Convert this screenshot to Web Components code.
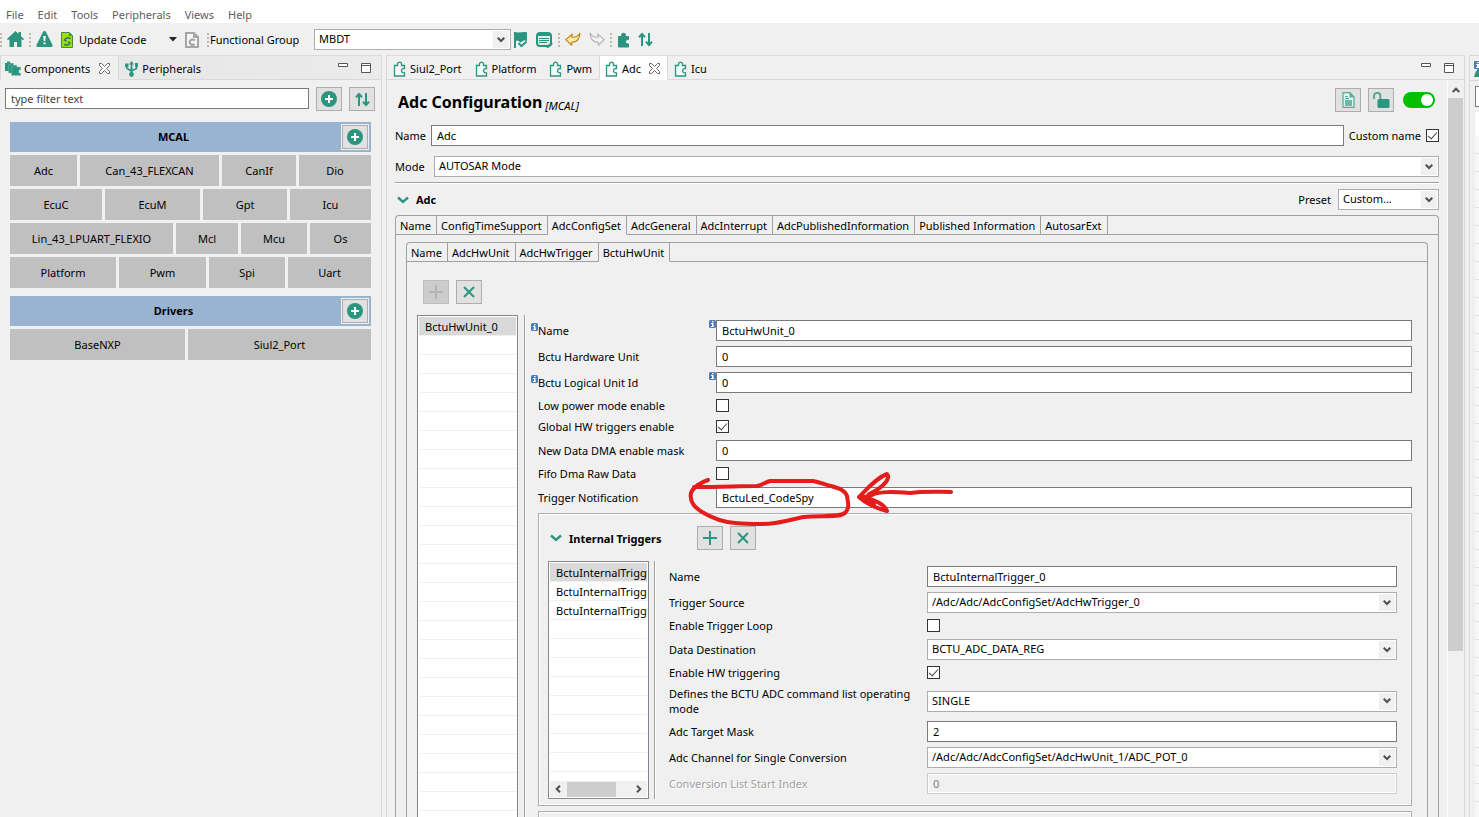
<!DOCTYPE html>
<html lang="en">
<head>
<meta charset="utf-8">
<title>Peripheral configuration</title>
<style>
html,body{margin:0;height:100%;overflow:hidden;background:#f0f0f0}
body{font:11px/15px "Noto Sans","Open Sans",sans-serif;color:#000}
</style>
</head>
<body>
<config-app></config-app>
<script>
const BASE = `*{box-sizing:border-box}
button,input,select{font:inherit;color:inherit;margin:0;border-radius:0;outline:none}
button{background:none;border:0;padding:0}
svg{display:block;flex:none}`;

const G = '#2b957f';
const PUZZLE = 'M1.5 4.500h3V3.200a2 2 0 1 1 4 0v1.300h3v3h-.8a2.200 2.200 0 1 0 0 4.400h.8v3.100h-10z';
const ICONS = {
  home: [17,17,`<path fill="${G}" d="M8.500 0 0 8l1 1.300 1.500-1.200V16H7v-5h3v5h4.500V8.100L16 9.300 17 8l-3-2.800V1h-2.500v2z"/>`],
  warn: [17,17,`<path fill="${G}" d="M8.500 0c.8 0 1.200.5 1.600 1.200l6.300 12.500c.6 1.300 0 2.300-1.200 2.300H1.800C.6 16 0 15 .6 13.700L6.900 1.200C7.300.5 7.700 0 8.500 0z"/><path fill="#fff" d="M7.300 5h2.400l-.4 5H7.700zM7.500 11.300h2v2h-2z"/>`],
  update: [12,16,`<path fill="#a4dc00" stroke="#3f8f3c" d="M.5.5h8l3 3v12H.5z"/><path fill="#2b7f5f" d="M8 1v3h3z"/><path fill="none" stroke="#2b7f5f" stroke-width="1.600" d="M9.500 6.500c-2-1-5-.8-6 1.500l2 1M3 12.500c2 1 5 .5 6-1.500L7 10"/>`],
  code: [14,16,`<path fill="#f6f6f6" stroke="#a6a6a6" stroke-width="2" d="M1 1h8l4 4v10H1z"/><path fill="none" stroke="#a0a0a0" stroke-width="2" d="M9.800 8.500C8 6.800 4.600 7.500 4.600 10.200S8 13.600 9.800 12"/><path fill="#a6a6a6" d="M8 1v5h5z"/>`],
  caret: [8,5,`<path fill="#222" d="M0 0h8L4 4.500z"/>`],
  flag: [14,16,`<path fill="${G}" d="M0 0h2c3 1.500 7-1 11 .5V9l-3-.8-3.500 2.300L4 8.500 2 9v7H0z"/><path fill="none" stroke="${G}" stroke-width="2" d="m4.500 11 3 3.200 5-4.700"/>`],
  table: [17,16,`<rect x="1" y="1" width="14" height="13" rx="3" fill="#dcefe9" stroke="${G}" stroke-width="2"/><path fill="${G}" d="M1 1h14v3H1z"/><path stroke="${G}" d="M3 6.500h10M3 8.500h10M3 10.500h8"/><path fill="none" stroke="${G}" stroke-width="2" d="m10 13.500 1.700 1.500 4.500-4"/>`],
  undo: [16,15,`<path fill="#fdeaa8" stroke="#c3831c" stroke-width="1.200" stroke-linejoin="round" d="M7.200 2.200.8 7.600l5.800 5.600.3-3C11.500 10.500 15 7 14.800 1.200 13 4.500 10 5.500 7 5.200z"/>`],
  redo: [16,15,`<path fill="#f2f2f2" stroke="#b4b4b4" stroke-width="1.200" stroke-linejoin="round" d="M8.800 2.200l6.400 5.400-5.800 5.600-.3-3C4.500 10.500 1 7 1.200 1.200 3 4.500 6 5.500 9 5.200z"/>`],
  puzzleFull: [13,16,`<path fill="${G}" stroke="${G}" d="${PUZZLE}"/>`],
  puzzle: [13,16,`<path fill="#f4faf8" stroke="${G}" stroke-width="1.300" d="${PUZZLE}"/>`],
  sort: [15,15,`<path fill="none" stroke="${G}" stroke-width="2" d="M4 14V2M1 5.200 4 2l3 3.200M11 1v12M8 9.800l3 3.200 3-3.200"/>`],
  boxes: [16,15,`<path fill="${G}" d="M0 2h2V.5h3V2h3v8H0z"/><path fill="${G}" stroke="#8fcabc" stroke-width=".4" d="M3.500 4h2V2.500h3V4H12v8H3.500z"/><path fill="${G}" stroke="#8fcabc" stroke-width=".4" d="M6.500 6h2V4.500h3V6h4.200v3H14v3h1.700v2.500H6.500z"/>`],
  usb: [13,16,`<path fill="none" stroke="${G}" stroke-width="1.800" d="M6.500 2v11M1.700 4v2.500c0 2 4.800 2 4.800 4.500M11.500 3.500V7c0 2-5 1.500-5 3.500"/><path fill="${G}" d="M6.500 0 9 3.500H4zM0 2.500h3.500V6H0zM10 2h3v3.500h-3z"/><circle cx="6.500" cy="13.500" r="2.400" fill="${G}"/>`],
  close: [11,11,`<path fill="#fff" stroke="#666" d="M.5.5h2l3 3 3-3h2v2l-3 3 3 3v2h-2l-3-3-3 3h-2v-2l3-3-3-3z"/>`],
  min: [10,4,`<path fill="#fff" stroke="#555" d="M.5.5h9v3h-9z"/>`],
  max: [10,10,`<path fill="#fff" stroke="#555" d="M.5.5h9v9h-9zM.5 2.500h9"/>`],
  add: [16,16,`<circle cx="8" cy="8" r="8" fill="${G}"/><path stroke="#fff" stroke-width="2" d="M8 4v8M4 8h8"/>`],
  plus: [14,14,`<path stroke="${G}" stroke-width="2" d="M7 0v14M0 7h14"/>`],
  plusOff: [14,14,`<path stroke="#b4b4b4" stroke-width="2" d="M7 0v14M0 7h14"/>`],
  cross: [12,12,`<path stroke="${G}" stroke-width="2" d="m1 1 10 10M11 1 1 11"/>`],
  doc: [13,16,`<path fill="#e6f2ef" stroke="#5aab9a" stroke-width="1.300" d="M1 .7h7L12 5v10.300H1z"/><path fill="${G}" d="M7.500.5V5.500H12z" opacity=".7"/><path stroke="#5aab9a" d="M3 4.500h3M3 6.500h4"/><path fill="#6fb8a8" d="M3 8h7v6H3z"/>`],
  lock: [17,16,`<path fill="none" stroke="#4ba592" stroke-width="1.800" d="M1 7V4a3.200 3.200 0 0 1 6.400 0v4"/><rect x="4.500" y="7" width="12" height="9" rx="1.500" fill="${G}"/>`],
  chevron: [12,8,`<path fill="none" stroke="${G}" stroke-width="2.400" d="m1 1.500 5 4.500 5-4.500"/>`],
  down: [8,6,`<path fill="none" stroke="#505050" stroke-width="2" d="m.7.7 3.300 3.300L7.300.7"/>`],
  up: [8,6,`<path fill="none" stroke="#505050" stroke-width="2" d="m.7 5L4 1.700 7.300 5"/>`],
  left: [6,8,`<path fill="none" stroke="#505050" stroke-width="2" d="M5 .7 1.700 4 5 7.300"/>`],
  right: [6,8,`<path fill="none" stroke="#505050" stroke-width="2" d="m1 .7L4.300 4 1 7.300"/>`],
  info: [7,8,`<rect width="7" height="8" rx="1.500" fill="#4a7db5"/><path fill="#fff" d="M3 1h1.500v1.300H3zM2 3h2.500v3H5v1H2V6h1V4H2z"/>`],
};
const icon = n => { const [w,h,b] = ICONS[n]; return `<svg width="${w}" height="${h}" viewBox="0 0 ${w} ${h}" fill="none" aria-hidden="true">${b}</svg>`; };

function define(name, css, html) {
  customElements.define(name, class extends HTMLElement {
    connectedCallback() {
      if (this.shadowRoot) return;
      const t = document.createElement('template');
      t.innerHTML = `<style>${BASE}${css}</style>${typeof html === 'function' ? html(this) : html}`;
      this.attachShadow({mode:'open'}).append(t.content.cloneNode(true));
    }
  });
}
const at = (el, n, d='') => el.getAttribute(n) ?? d;
const list = (el, n) => at(el, n).split('|').filter(Boolean);

define('ui-icon', ':host{display:block;flex:none}', el => icon(at(el,'name')));

define('icon-button', `:host{display:block;flex:none}
button{display:grid;place-items:center;width:26px;height:24px;background:#e1e1e1;border:1px solid #adadad}
button:disabled{background:#ccc;border-color:#bfbfbf}`,
  el => `<button type="button" aria-label="${at(el,'label')}"${el.hasAttribute('disabled')?' disabled':''}>${icon(at(el,'icon'))}</button>`);

const SELECT = `select{display:block;width:100%;height:21px;appearance:none;background:#fff;border:1px solid #acacb2;padding:0 20px 2px 4px;line-height:15px}
.pick{display:grid}
.pick>*{grid-area:1/1}
.pick span{justify-self:end;align-self:center;display:grid;place-items:center;width:16px;height:17px;margin-right:2px;background:#f0f0f0;pointer-events:none}`;
const CHECK = `input[type=checkbox]{appearance:none;display:grid;place-items:center;width:13px;height:13px;border:1px solid #333;background:#fff;flex:none}
input[type=checkbox]:checked::after{content:"";width:8px;height:4px;border:solid #444;border-width:0 0 1px 1px;transform:rotate(-48deg);margin-bottom:3px}`;
const TEXT = `input[type=text]{width:100%;height:21px;border:1px solid #7a7a7a;background:#fff;padding:0 5px}`;

define('drop-down', `:host{display:block}${SELECT}`,
  el => `<div class="pick"><select aria-label="${at(el,'label')}"><option>${at(el,'value')}</option></select><span>${icon('down')}</span></div>`);

define('form-row', `:host{display:grid;grid-template-columns:var(--label-width) 1fr;align-items:center;min-height:16px}
:host([kind=check]){align-items:start}
:host([kind=check]) .field{padding-top:1px}
label{position:relative;padding-right:8px}
.field{position:relative;min-width:0}
i{position:absolute;left:-7px;top:0}
${CHECK}${TEXT}${SELECT}
input[type=text]:disabled{background:#f0f0f0;border-color:#ccc;box-shadow:inset 0 0 0 1px #fff;color:#7d7d7d}
.off{color:#a0a0a0;text-shadow:1px 1px #fff}`,
  el => {
    const v = at(el,'value'), k = at(el,'kind','text'), off = el.hasAttribute('disabled');
    const badge = el.hasAttribute('info') ? `<i>${icon('info')}</i>` : '';
    const ctl = k === 'check' ? `<input id="c" type="checkbox"${v?' checked':''}>`
      : k === 'select' ? `<div class="pick"><select id="c"><option>${v}</option></select><span>${icon('down')}</span></div>`
      : `<input id="c" type="text" value="${v}"${off?' disabled':''}>`;
    return `<label for="c"${off?' class="off"':''}>${badge}${at(el,'label')}</label><div class="field">${badge}${ctl}<slot></slot></div>`;
  });

define('item-list', `:host{display:flex;flex-direction:column;width:101px;border:1px solid #828790;padding:1px;background:#fff;min-height:0;overflow:hidden}
ul{list-style:none;margin:0;padding:0;flex:1;background:repeating-linear-gradient(#fff 0 18px,#f0f0f0 18px 19px)}
li{height:19px;line-height:19px;padding-left:6px;white-space:nowrap;overflow:hidden;border-bottom:1px solid #f0f0f0}
li:first-child{background:#d9d9d9}
.bar{display:flex;align-items:center;height:16px;background:#f0f0f0;padding:0 5px}
.bar b{width:49px;height:15px;background:#cdcdcd;margin:0 auto 0 6px}`,
  el => `<ul>${list(el,'items').map(i=>`<li>${i}</li>`).join('')}</ul>${el.hasAttribute('scroll')?`<div class="bar">${icon('left')}<b></b>${icon('right')}</div>`:''}`);

define('tab-box', `:host{display:flex;flex-direction:column;border:1px solid #a0a0a0;border-radius:4px 4px 0 0;min-height:0}
nav{display:flex;height:19px;flex:none}
button{border-right:1px solid #a0a0a0;border-bottom:1px solid #a0a0a0;padding:0 5px 0 4px;white-space:nowrap}
button[aria-selected=true]{border-bottom-color:transparent}
nav::after{content:"";flex:1;border-bottom:1px solid #a0a0a0}`,
  el => `<nav role="tablist">${list(el,'tabs').map((t,i)=>`<button type="button" role="tab" aria-selected="${i==at(el,'active')}">${t}</button>`).join('')}</nav><slot></slot>`);

define('view-tabs', `:host{display:flex;height:25px;flex:none;background:#f0f0f0;border-top:1px solid #dcdcdc}
button{display:flex;align-items:center;gap:4px;padding:2px 7px 0 6px;border-bottom:1px solid #d9d9d9;white-space:nowrap}
.on{background:var(--active,#f0f0f0);border-bottom-color:var(--active,#f0f0f0);border-right:1px solid #d9d9d9}
.on:not(:first-child){border-left:1px solid #d9d9d9;padding-left:5px}
.on .x{margin-left:4px}
:host([wide]) button{background:#e8e8e8}
:host([wide]) .on{background:#f0f0f0;padding:2px 8px 0 4px;gap:3px}
:host([wide]) .on .x{margin-left:6px}
div{flex:1;display:flex;justify-content:flex-end;gap:13px;padding:7px 10px 0 0;border-bottom:1px solid #d9d9d9}
:host([wide]) div{background:linear-gradient(90deg,#e8e8e8,#ebebeb)}`,
  el => list(el,'tabs').map(t => { const [n,ic,on] = t.split(':');
    return `<button type="button" role="tab" class="${on?'on':''}">${icon(ic)}<span>${n}</span>${on?`<span class="x">${icon('close')}</span>`:''}</button>`; }).join('')
    + `<div>${icon('min')}${icon('max')}</div>`);

define('menu-bar', `:host{display:block;background:#fff;flex:none}
nav{display:flex;height:23px;padding:7px 0 0 6px;gap:14px;color:#5d5d5d}
button{height:15px}`,
  `<nav>${['File','Edit','Tools','Peripherals','Views','Help'].map(t=>`<button type="button">${t}</button>`).join('')}</nav>`);

define('tool-bar', `:host{display:flex;align-items:center;height:32px;padding-top:1px;flex:none}
button{display:flex;align-items:center;flex:none;margin-left:var(--lead,0)}
hr{width:2px;height:14px;border:0;margin:0 5px;background:repeating-linear-gradient(#bdb7ac 0 2px,transparent 2px 4px);flex:none}
.first{margin-left:0}
.tight{margin-right:1px}
.gap{--lead:8px}
.w{width:116px;gap:6px}
.w svg:last-child{margin-left:auto}
.code{padding-right:3px}
.g{display:flex;align-items:center;width:304px}
.g span{width:104px}
drop-down{width:197px}`,
  `<hr class="first"><button aria-label="Home">${icon('home')}</button><hr><button aria-label="Problems">${icon('warn')}</button>
  <button class="gap w">${icon('update')}<span>Update Code</span>${icon('caret')}</button>
  <button class="gap code" aria-label="Generate">${icon('code')}</button><hr class="tight">
  <div class="g"><span>Functional Group</span><drop-down label="Functional Group" value="MBDT"></drop-down></div>
  <button aria-label="Flag">${icon('flag')}</button><button class="gap" aria-label="Table">${icon('table')}</button><hr>
  <button aria-label="Undo">${icon('undo')}</button><button class="gap" aria-label="Redo">${icon('redo')}</button><hr>
  <button aria-label="Components">${icon('puzzleFull')}</button><button class="gap" aria-label="Sort">${icon('sort')}</button>`);

define('component-group', `:host{display:block;margin-bottom:8px}
header{display:flex;align-items:center;height:30px;background:#99b4d1;font-weight:700;text-align:center}
header span{flex:1;padding:0 4px 2px 0}
.plus{margin-right:2px;border:1px solid #f0f0f0}
div{display:grid;gap:3px;margin-top:3px}
div button{height:31px;min-width:0;background:#c0c0c0;white-space:nowrap}`,
  el => `<header><span>${at(el,'name')}</span><icon-button class="plus" icon="add" label="Add ${at(el,'name')}"></icon-button></header>` +
    list(el,'rows').map(r => { const c = r.split(',').map(x=>x.split(':'));
      return `<div style="grid-template-columns:${c.map(x=>x[1]+'fr').join(' ')}">${c.map(x=>`<button type="button">${x[0]}</button>`).join('')}</div>`; }).join(''));

define('components-view', `:host{display:flex;flex-direction:column;width:382px;flex:none;border-right:1px solid #d9d9d9}
.filter{display:flex;gap:7px;padding:7px 6px 11px 5px}
input{flex:1;height:21px;margin:1px 0 0;border:1px solid #7a7a7a;background:#fff;padding:0 5px}
input::placeholder{color:#444;opacity:1}
section{padding:0 10px}`,
  `<view-tabs wide tabs="Components:boxes:on|Peripherals:usb"></view-tabs>
  <div class="filter"><input type="text" placeholder="type filter text" aria-label="Filter"><icon-button icon="add" label="Add component"></icon-button><icon-button icon="sort" label="Sort"></icon-button></div>
  <section>
  <component-group name="MCAL" rows="Adc:67,Can_43_FLEXCAN:139,CanIf:74,Dio:72|EcuC:92,EcuM:95,Gpt:84,Icu:81|Lin_43_LPUART_FLEXIO:163,Mcl:62,Mcu:66,Os:61|Platform:106,Pwm:87,Spi:76,Uart:83"></component-group>
  <component-group name="Drivers" rows="BaseNXP:175,Siul2_Port:183"></component-group>
  </section>`);

/* Hand-drawn marker: a loop round the field's value and an arrow that points to it. */
define('red-marker', ':host{position:absolute;left:-30px;top:-17px;pointer-events:none}',
  `<svg width="270" height="58" viewBox="686 470 270 58" fill="none" stroke="#e51c1c" stroke-width="4" stroke-linecap="round" stroke-linejoin="round" aria-hidden="true">
  <path d="M708 480C702 482 693 487 691 493C689 503 696 508 702 512C712 518 722 522 735 523C748 524 762 525 775 523C788 521 797 518 804 517C820 515 838 518 845 513C850 508 848 503 847 496C845 490 838 488 831 486C825 485 820 482 813 481L770 481C764 483 762 485 757 486C740 486 720 487 694 487"/>
  <path d="M951 492C937 492 925 491 910 493C895 492 880 491 872 495L861 498L859 497C866 490 876 478 887 474C891 477 885 487 869 494M860 498C866 503 872 507 887 511C884 504 874 499 864 498L874 504"/></svg>`);

define('trigger-group', `:host{display:block;border:1px solid #acacb2;box-shadow:inset 0 0 0 1px #fff;padding:12px 14px 6px 9px}
header{display:flex;align-items:center;gap:7px;height:24px;padding-left:2px;margin-bottom:11px}
h3{font-size:11px;margin:0;width:121px}
.cols{display:grid;grid-template-columns:101px 2px 1fr;column-gap:5px}
.sash{background:linear-gradient(90deg,#a0a0a0 50%,#fff 50%)}
form{--label-width:258px;display:flex;flex-direction:column;gap:5px;padding:5px 0 5px 8px;min-width:0}`,
  `<header>${icon('chevron')}<h3>Internal Triggers</h3><icon-button icon="plus" label="Add"></icon-button><icon-button icon="cross" label="Remove"></icon-button></header>
  <div class="cols"><item-list scroll items="BctuInternalTrigger_0|BctuInternalTrigger_1|BctuInternalTrigger_2"></item-list><div class="sash"></div>
  <form>
  <form-row label="Name" value="BctuInternalTrigger_0"></form-row>
  <form-row label="Trigger Source" kind="select" value="/Adc/Adc/AdcConfigSet/AdcHwTrigger_0"></form-row>
  <form-row label="Enable Trigger Loop" kind="check"></form-row>
  <form-row label="Data Destination" kind="select" value="BCTU_ADC_DATA_REG"></form-row>
  <form-row label="Enable HW triggering" kind="check" value="on"></form-row>
  <form-row label="Defines the BCTU ADC command list operating mode" kind="select" value="SINGLE"></form-row>
  <form-row label="Adc Target Mask" value="2"></form-row>
  <form-row label="Adc Channel for Single Conversion" kind="select" value="/Adc/Adc/AdcConfigSet/AdcHwUnit_1/ADC_POT_0"></form-row>
  <form-row label="Conversion List Start Index" value="0" disabled></form-row>
  </form></div>`);

define('bctu-page', `:host{display:flex;flex-direction:column;flex:1;padding:18px 15px 0 10px;min-height:0}
.tools{display:flex;gap:7px;padding-left:6px;margin-bottom:11px}
.cols{flex:1;min-height:0;display:grid;grid-template-columns:101px 2px 1fr;column-gap:6px;overflow:hidden}
.sash{background:linear-gradient(90deg,#a0a0a0 50%,#fff 50%)}
form{--label-width:178px;display:flex;flex-direction:column;gap:5px;padding:5px 0 0 6px;min-width:0}
.next{flex:none;height:120px;border:1px solid #acacb2;box-shadow:inset 0 0 0 1px #fff}`,
  `<div class="tools"><icon-button icon="plusOff" label="Add" disabled></icon-button><icon-button icon="cross" label="Remove"></icon-button></div>
  <div class="cols"><item-list items="BctuHwUnit_0"></item-list><div class="sash"></div>
  <form>
  <form-row info label="Name" value="BctuHwUnit_0"></form-row>
  <form-row label="Bctu Hardware Unit" value="0"></form-row>
  <form-row info label="Bctu Logical Unit Id" value="0"></form-row>
  <form-row label="Low power mode enable" kind="check"></form-row>
  <form-row label="Global HW triggers enable" kind="check" value="on"></form-row>
  <form-row label="New Data DMA enable mask" value="0"></form-row>
  <form-row label="Fifo Dma Raw Data" kind="check"></form-row>
  <form-row label="Trigger Notification" value="BctuLed_CodeSpy"><red-marker></red-marker></form-row>
  <trigger-group></trigger-group>
  <div class="next"></div>
  </form></div>`);

define('editor-view', `:host{display:flex;flex-direction:column;flex:1;min-width:0;border:solid #d9d9d9;border-width:0 1px;margin-left:4px}
view-tabs{--active:#fff}
.body{flex:1;min-height:0;display:flex}
.scroll{width:17px;flex:none;border-left:1px solid #fff;padding-right:1px;display:flex;flex-direction:column;margin-left:8px}
.scroll ui-icon{height:18px;padding:7px 4px 5px}
.scroll b{height:553px;background:#cdcdcd}
main{flex:1;min-width:0;padding:8px 0 0 8px;display:flex;flex-direction:column}
.head{display:flex;align-items:center;height:24px;margin-bottom:13px;gap:7px;padding-left:3px}
h1{display:flex;align-items:baseline;gap:3px;font-size:16px;line-height:24px;margin:0 auto 0 0;padding-top:4px}
h1 em{font-size:11px;line-height:16px;font-weight:400;padding-top:2px}
h1 em{align-self:end}
.row{display:flex;align-items:center;height:21px;gap:5px}
.row .name{width:32px}
.row .custom{width:75px;white-space:nowrap}
${CHECK}${TEXT}
input.switch{width:32px;height:16px;border:0;border-radius:8px;background:#00c000;padding:2px;margin:0 4px 0 2px;justify-items:end}
input.switch:checked::after{width:12px;height:12px;border:0;border-radius:6px;background:#fff;transform:none;margin:0}
drop-down{flex:1}
.mode{margin:10px 0 5px;gap:7px}
hr{flex:none;width:100%;height:2px;border:0;margin:0 0 5px;background:linear-gradient(#a0a0a0 50%,#fff 50%)}
.sec{gap:7px;margin-bottom:5px;padding-left:2px}
h2{font-size:11px;margin:0 auto 0 0}
.sec drop-down{flex:none;width:101px}
.outer,.inner{flex:1}
.outer{border-bottom:0}
.inner{margin:7px 10px 0;border-bottom:0}`,
  `<view-tabs tabs="Siul2_Port:puzzle|Platform:puzzle|Pwm:puzzle|Adc:puzzle:on|Icu:puzzle"></view-tabs>
  <div class="body"><main>
  <div class="head"><h1>Adc Configuration <em>[MCAL]</em></h1><icon-button icon="doc" label="Documentation"></icon-button><icon-button icon="lock" label="Unlock"></icon-button><input class="switch" type="checkbox" role="switch" checked aria-label="Enabled"></div>
  <div class="row"><label class="name" for="n">Name</label><input id="n" type="text" value="Adc"><label class="custom" for="cn">Custom name</label><input id="cn" type="checkbox" checked></div>
  <div class="row mode"><span class="name">Mode</span><drop-down label="Mode" value="AUTOSAR Mode"></drop-down></div>
  <hr>
  <div class="row sec">${icon('chevron')}<h2>Adc</h2><span>Preset</span><drop-down label="Preset" value="Custom..."></drop-down></div>
  <tab-box class="outer" active="2" tabs="Name|ConfigTimeSupport|AdcConfigSet|AdcGeneral|AdcInterrupt|AdcPublishedInformation|Published Information|AutosarExt">
  <tab-box class="inner" active="3" tabs="Name|AdcHwUnit|AdcHwTrigger|BctuHwUnit"><bctu-page></bctu-page></tab-box>
  </tab-box>
  </main><div class="scroll"><ui-icon name="up"></ui-icon><b></b></div></div>`);

define('side-strip', `:host{display:flex;flex-direction:column;width:10px;flex:none;margin-left:4px;border:1px solid #d9d9d9;border-width:1px 0 0 1px;overflow:hidden}
header{height:25px;flex:none;border-bottom:1px solid #d9d9d9;padding:5px 0 0 4px}
p{height:21px;flex:none;margin:5px 0 5px 5px;border:1px solid #7a7a7a;border-right:0;background:#fff}
div{flex:1;margin-left:5px;border-top:24px solid #fff;background:repeating-linear-gradient(#f7f7f7 0 17px,#e2e2e2 17px 18px)}`,
  `<header><svg width="16" height="16"><path fill="${G}" d="M0 16C1 11 3 8 6 6v10z"/><rect width="8" height="8" rx="1" fill="#4a7db5"/><path fill="#fff" d="M3 1h2v1H3zM2 3h3v3h1v1H2V6h1V4H2z"/></svg></header><p></p><div></div>`);

define('config-app', `:host{display:flex;flex-direction:column;height:100vh}
.work{flex:1;display:flex;min-height:0}`,
  `<menu-bar></menu-bar><tool-bar></tool-bar><div class="work"><components-view></components-view><editor-view></editor-view><side-strip></side-strip></div>`);
</script>
</body>
</html>
